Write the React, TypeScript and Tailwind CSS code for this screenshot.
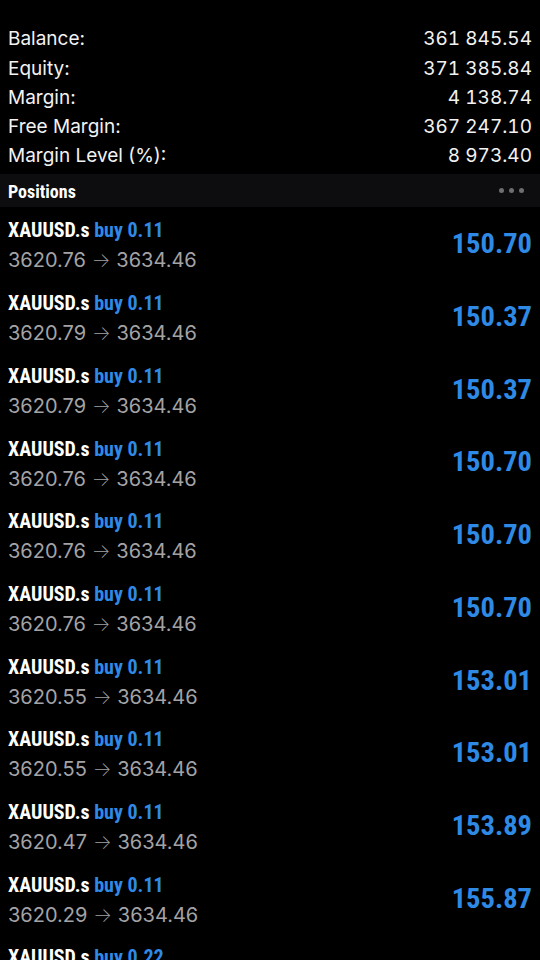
import React from "react";

const summary = [
  ["Balance:", "361 845.54"],
  ["Equity:", "371 385.84"],
  ["Margin:", "4 138.74"],
  ["Free Margin:", "367 247.10"],
  ["Margin Level (%):", "8 973.40"],
];

const positions = [
  ["0.11", "3620.76", "150.70"],
  ["0.11", "3620.79", "150.37"],
  ["0.11", "3620.79", "150.37"],
  ["0.11", "3620.76", "150.70"],
  ["0.11", "3620.76", "150.70"],
  ["0.11", "3620.76", "150.70"],
  ["0.11", "3620.55", "153.01"],
  ["0.11", "3620.55", "153.01"],
  ["0.11", "3620.47", "153.89"],
  ["0.11", "3620.29", "155.87"],
  ["0.22", "3620.29", "311.74"],
];

const narrow: React.CSSProperties = { fontFamily: 'Roboto, "Open Sans", sans-serif', fontStretch: "75%" };
const sans: React.CSSProperties = { fontFamily: 'Inter, "Noto Sans", sans-serif' };

export default function App() {
  return (
    <div className="w-[540px] h-[960px] overflow-hidden bg-black text-white" style={sans}>
      <div className="pt-[25px] pb-[3px] px-[8px]">
        {summary.map(([k, v]) => (
          <div key={k} className="flex justify-between h-[29.2px] items-center text-[19px] text-[#f2f2f2]">
            <span>{k}</span>
            <span className="tabular-nums">{v}</span>
          </div>
        ))}
      </div>
      <div className="h-[33px] bg-[#0d0d0f] flex items-center justify-between pl-[8px] pr-[16px]">
        <span className="text-[18px] font-bold text-white pt-[2px]" style={narrow}>Positions</span>
        <div className="flex gap-[5px]">
          <span className="w-[5px] h-[5px] rounded-full bg-[#6e6e72]" />
          <span className="w-[5px] h-[5px] rounded-full bg-[#6e6e72]" />
          <span className="w-[5px] h-[5px] rounded-full bg-[#6e6e72]" />
        </div>
      </div>
      <div>
        {positions.map(([lot, open, profit], i) => (
          <div key={i} className="h-[72.7px] flex justify-between px-[8px]">
            <div className="pt-[10.5px]">
              <div className="leading-[26px] text-[20px] font-bold whitespace-nowrap" style={narrow}>
                <span className="text-white">XAUUSD.s</span>{" "}
                <span className="text-[#2f8ae6]">buy {lot}</span>
              </div>
              <div className="leading-[34px] text-[20px] text-[#a3a3a6] whitespace-nowrap">
                {open} <span className="font-extralight">→</span> 3634.46
              </div>
            </div>
            <div className="flex items-center pt-[3px]">
              <span className="text-[28.5px] font-bold text-[#2f8ae6]" style={narrow}>{profit}</span>
            </div>
          </div>
        ))}
      </div>
    </div>
  );
}
